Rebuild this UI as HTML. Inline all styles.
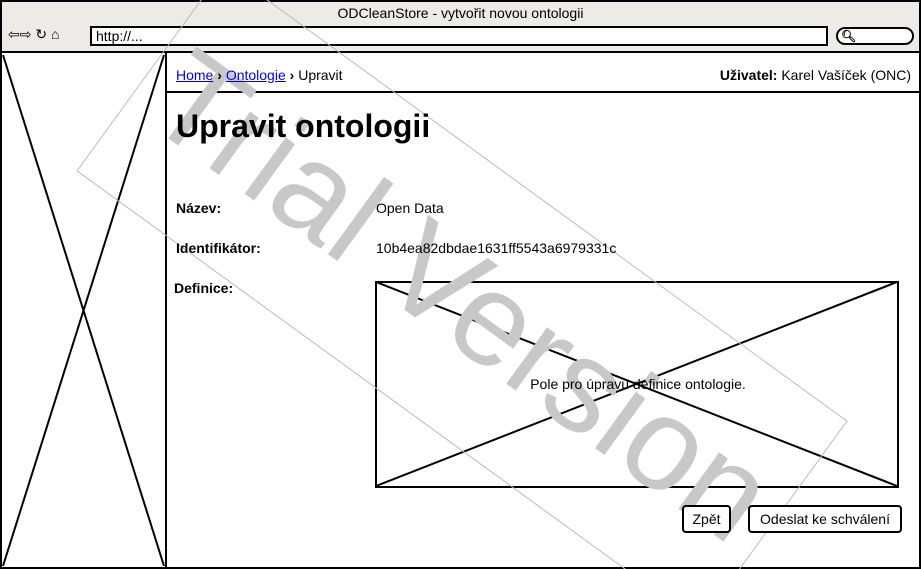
<!DOCTYPE html>
<html><head><meta charset="utf-8"><style>
*{margin:0;padding:0;box-sizing:border-box}
body{width:921px;height:569px;overflow:hidden;background:#fff;font-family:"Liberation Sans",sans-serif;color:#000;position:relative}
.a{position:absolute;white-space:nowrap}
a{color:#00e;text-decoration:underline}
.btn{position:absolute;border:2px solid #000;border-radius:4px;background:#fff;font-size:14px;text-align:center;line-height:24px}
.t{z-index:2}
</style></head><body>
<div class="a" style="left:0;top:0;width:921px;height:53px;background:#eeebe6;border:2px solid #000"></div>
<div class="a" style="left:0;top:5px;width:921px;text-align:center;font-size:14px">ODCleanStore - vytvořit novou ontologii</div>
<div class="a" style="left:8px;top:26px;font-size:14px">⇦⇨ ↻ ⌂</div>
<div class="a" style="left:90px;top:26px;width:738px;height:20px;border:2px solid #000;background:#fff;font-size:14px;line-height:16px;padding-left:4px">http://...</div>
<div class="a" style="left:836px;top:27px;width:78px;height:18px;border:2px solid #000;border-radius:9px;background:#fff;font-size:12px;line-height:14px;padding-left:3px;font-weight:bold">🔍︎</div>
<div class="a" style="left:0;top:51px;width:921px;height:518px;border:2px solid #000"></div>
<div class="a" style="left:165px;top:53px;width:2px;height:516px;background:#000"></div>
<div class="a" style="left:165px;top:91px;width:756px;height:2px;background:#000"></div>
<div class="a" style="left:375px;top:281px;width:524px;height:207px;border:2px solid #000"></div>
<svg class="a" style="left:0;top:0;overflow:hidden" width="921" height="569">
<g stroke="#000" stroke-width="2" fill="none">
<line x1="3" y1="55" x2="164" y2="566"/><line x1="164" y1="55" x2="3" y2="566"/>
<line x1="376" y1="282" x2="897" y2="486"/><line x1="897" y1="282" x2="376" y2="486"/>
</g>
<g transform="translate(462,296) rotate(36)">
<rect x="-385" y="-125" width="770" height="250" fill="none" stroke="#bbb" stroke-width="1"/>
<text x="0" y="45" text-anchor="middle" font-family="Liberation Sans,sans-serif" font-size="132" fill="#c8c8c8">Trial Version</text>
</g>
</svg>
<div class="a t" style="left:176px;top:67px;font-size:14px"><a>Home</a> <b>›</b> <a>Ontologie</a> <b>›</b> Upravit</div>
<div class="a t" style="right:10px;top:67px;font-size:14px"><b>Uživatel:</b> Karel Vašíček (ONC)</div>
<div class="a t" style="left:176px;top:108px;font-size:32px;font-weight:bold">Upravit ontologii</div>
<div class="a t" style="left:176px;top:200px;font-size:14px;font-weight:bold">Název:</div>
<div class="a t" style="left:376px;top:200px;font-size:14px">Open Data</div>
<div class="a t" style="left:176px;top:240px;font-size:14px;font-weight:bold">Identifikátor:</div>
<div class="a t" style="left:376px;top:240px;font-size:14px">10b4ea82dbdae1631ff5543a6979331c</div>
<div class="a t" style="left:174px;top:280px;font-size:14px;font-weight:bold">Definice:</div>
<div class="a t" style="left:376px;top:376px;width:524px;text-align:center;font-size:14px">Pole pro úpravu definice ontologie.</div>
<div class="btn t" style="left:682px;top:505px;width:49px;height:28px">Zpět</div>
<div class="btn t" style="left:748px;top:505px;width:154px;height:28px">Odeslat ke schválení</div>
</body></html>
